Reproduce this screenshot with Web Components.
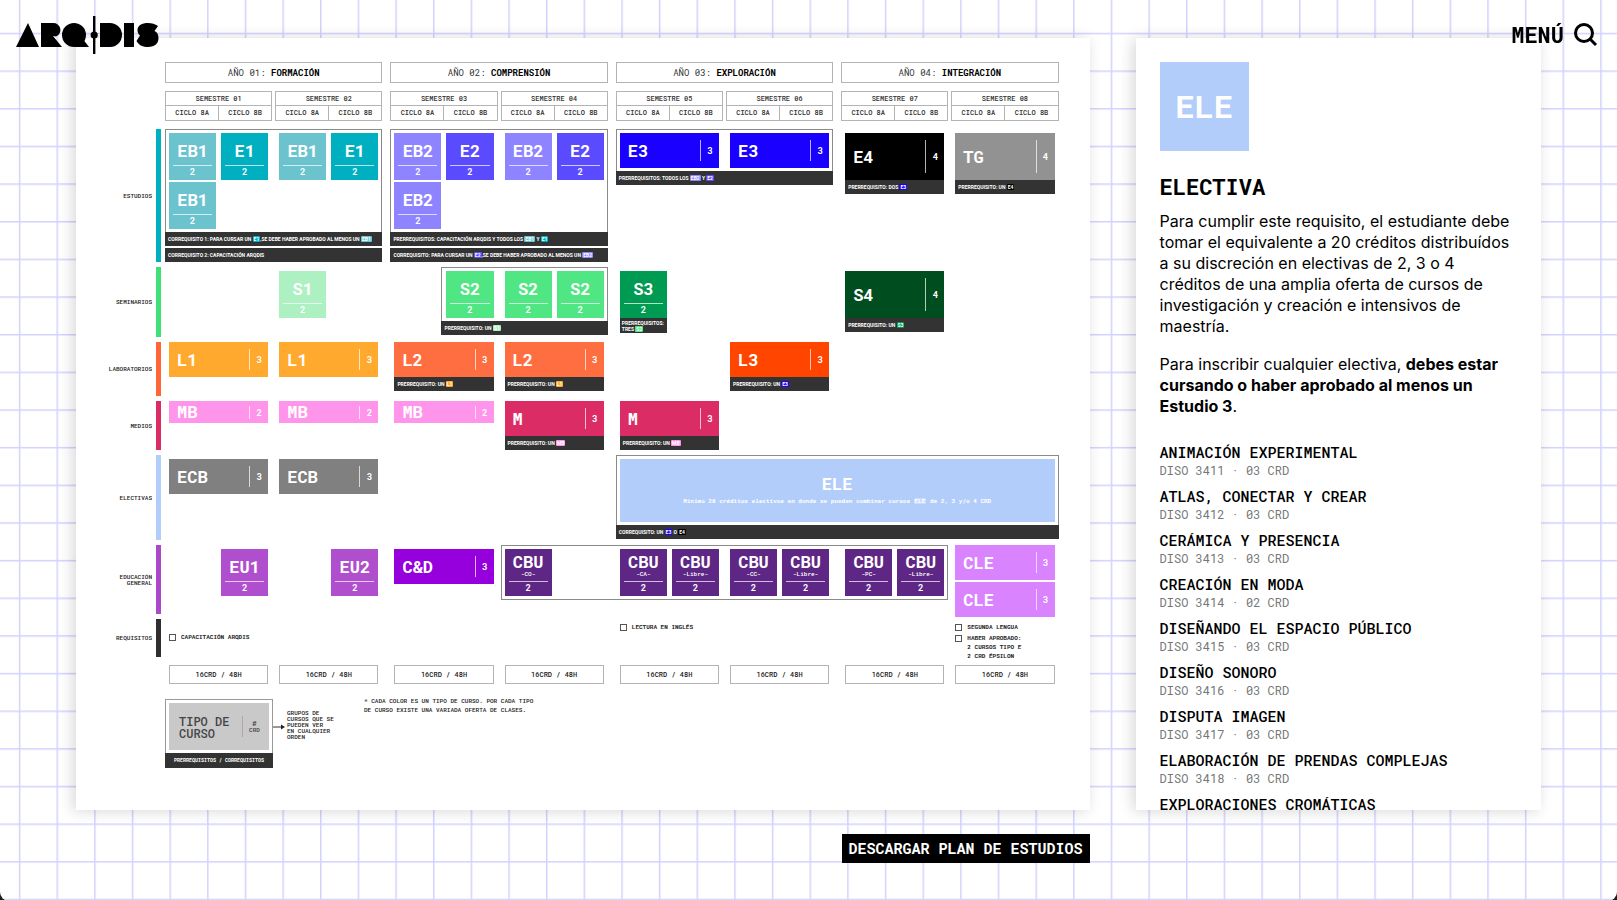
<!DOCTYPE html>
<html lang="es">
<head>
<meta charset="utf-8">
<meta name="viewport" content="width=device-width, initial-scale=1">
<title>ARQDIS · Plan de estudios</title>
<style>
  html { background: #1c1c1c; }
  body {
    margin: 0;
    color: #000;
    font-family: "Roboto Mono", "Liberation Mono", monospace;
    --mono: "Roboto Mono", "Liberation Mono", monospace;
    --sans: Inter, "Noto Sans", sans-serif;
    --note-font: Roboto, "Liberation Sans", sans-serif;
    --eb1: #6bc3ce; --e1: #00afc0; --eb2: #8e84ff; --e2: #5b4bff; --e3: #1a00ff; --e4: #000;
    --tg: #929292; --s1: #adf0c1; --s2: #4fe683; --s3: #009b52; --s4: #004d20;
    --l1: #ffaa2e; --l2: #ff6e40; --l3: #ff4500; --mb: #ff94eb; --m: #dc2c66;
    --ecb: #808080; --ele: #b2cdf9; --eu: #b04fcd; --cd: #9500dd; --cbu: #5f2785; --cle: #d983ff;
  }
</style>
</head>
<body>
<arq-page>
  <site-header slot="header"></site-header>

  <study-plan slot="plan" id="plan">
    <plan-year index="0" number="01" name="FORMACIÓN"></plan-year>
    <plan-year index="1" number="02" name="COMPRENSIÓN"></plan-year>
    <plan-year index="2" number="03" name="EXPLORACIÓN"></plan-year>
    <plan-year index="3" number="04" name="INTEGRACIÓN"></plan-year>

    <plan-row label="ESTUDIOS" style="--h:133px;--c:var(--e1)">
      <plan-block at="0" span="4" framed>
        <course-card at="0" color="eb1" credits="2">EB1</course-card>
        <course-card at="1" color="e1" credits="2">E1</course-card>
        <course-card at="2" color="eb1" credits="2">EB1</course-card>
        <course-card at="3" color="e1" credits="2">E1</course-card>
        <course-card at="0" row="2" color="eb1" credits="2">EB1</course-card>
        <plan-note slot="note">CORREQUISITO 1: PARA CURSAR UN <course-tag color="e1">E1</course-tag>,SE DEBE HABER APROBADO AL MENOS UN <course-tag color="eb1">EB1</course-tag></plan-note>
        <plan-note slot="note">CORREQUISITO 2: CAPACITACIÓN ARQDIS</plan-note>
      </plan-block>
      <plan-block at="4" span="4" framed>
        <course-card at="4" color="eb2" credits="2">EB2</course-card>
        <course-card at="5" color="e2" credits="2">E2</course-card>
        <course-card at="6" color="eb2" credits="2">EB2</course-card>
        <course-card at="7" color="e2" credits="2">E2</course-card>
        <course-card at="4" row="2" color="eb2" credits="2">EB2</course-card>
        <plan-note slot="note">PRERREQUISITOS: CAPACITACIÓN ARQDIS Y TODOS LOS <course-tag color="eb1">EB1</course-tag> Y <course-tag color="e1">E1</course-tag></plan-note>
        <plan-note slot="note">CORREQUISITO: PARA CURSAR UN <course-tag color="e2">E2</course-tag>,SE DEBE HABER APROBADO AL MENOS UN <course-tag color="eb2">EB2</course-tag></plan-note>
      </plan-block>
      <plan-block at="8" span="4" framed>
        <course-card at="8" span="2" color="e3" credits="3">E3</course-card>
        <course-card at="10" span="2" color="e3" credits="3">E3</course-card>
        <plan-note slot="note">PRERREQUISITOS: TODOS LOS <course-tag color="eb2">EB2</course-tag> Y <course-tag color="e2">E2</course-tag></plan-note>
      </plan-block>
      <plan-block at="12" span="2">
        <course-card at="12" span="2" size="tall" color="e4" credits="4">E4</course-card>
        <plan-note slot="note">PRERREQUISITO: DOS <course-tag color="e3">E3</course-tag></plan-note>
      </plan-block>
      <plan-block at="14" span="2">
        <course-card at="14" span="2" size="tall" color="tg" credits="4">TG</course-card>
        <plan-note slot="note">PRERREQUISITO: UN <course-tag color="e4">E4</course-tag></plan-note>
      </plan-block>
    </plan-row>

    <plan-row label="SEMINARIOS" style="--h:70px;--c:#3fe077">
      <plan-block at="2" span="1">
        <course-card at="2" color="s1" credits="2">S1</course-card>
      </plan-block>
      <plan-block at="5" span="3" framed>
        <course-card at="5" color="s2" credits="2">S2</course-card>
        <course-card at="6" color="s2" credits="2">S2</course-card>
        <course-card at="7" color="s2" credits="2">S2</course-card>
        <plan-note slot="note">PRERREQUISITO: UN <course-tag color="s1">S1</course-tag></plan-note>
      </plan-block>
      <plan-block at="8" span="1">
        <course-card at="8" color="s3" credits="2">S3</course-card>
        <plan-note slot="note" compact>PRERREQUISITOS:<br>TRES <course-tag color="s2">S2</course-tag></plan-note>
      </plan-block>
      <plan-block at="12" span="2">
        <course-card at="12" span="2" size="tall" color="s4" credits="4">S4</course-card>
        <plan-note slot="note">PRERREQUISITO: UN <course-tag color="s3">S3</course-tag></plan-note>
      </plan-block>
    </plan-row>

    <plan-row label="LABORATORIOS" flush style="--h:54px;--c:#ff6537">
      <plan-block at="0" span="2"><course-card at="0" span="2" color="l1" credits="3">L1</course-card></plan-block>
      <plan-block at="2" span="2"><course-card at="2" span="2" color="l1" credits="3">L1</course-card></plan-block>
      <plan-block at="4" span="2">
        <course-card at="4" span="2" color="l2" credits="3">L2</course-card>
        <plan-note slot="note">PRERREQUISITO: UN <course-tag color="l1">L1</course-tag></plan-note>
      </plan-block>
      <plan-block at="6" span="2">
        <course-card at="6" span="2" color="l2" credits="3">L2</course-card>
        <plan-note slot="note">PRERREQUISITO: UN <course-tag color="l1">L1</course-tag></plan-note>
      </plan-block>
      <plan-block at="10" span="2">
        <course-card at="10" span="2" color="l3" credits="3">L3</course-card>
        <plan-note slot="note">PRERREQUISITO: UN <course-tag color="e3">E3</course-tag></plan-note>
      </plan-block>
    </plan-row>

    <plan-row label="MEDIOS" flush style="--h:49px;--c:var(--m)">
      <plan-block at="0" span="2"><course-card at="0" span="2" size="slim" color="mb" credits="2">MB</course-card></plan-block>
      <plan-block at="2" span="2"><course-card at="2" span="2" size="slim" color="mb" credits="2">MB</course-card></plan-block>
      <plan-block at="4" span="2"><course-card at="4" span="2" size="slim" color="mb" credits="2">MB</course-card></plan-block>
      <plan-block at="6" span="2">
        <course-card at="6" span="2" color="m" credits="3">M</course-card>
        <plan-note slot="note">PRERREQUISITO: UN <course-tag color="mb">MB</course-tag></plan-note>
      </plan-block>
      <plan-block at="8" span="2">
        <course-card at="8" span="2" color="m" credits="3">M</course-card>
        <plan-note slot="note">PRERREQUISITO: UN <course-tag color="mb">MB</course-tag></plan-note>
      </plan-block>
    </plan-row>

    <plan-row label="ELECTIVAS" style="--h:85px;--c:var(--ele)">
      <plan-block at="0" span="2"><course-card at="0" span="2" color="ecb" credits="3">ECB</course-card></plan-block>
      <plan-block at="2" span="2"><course-card at="2" span="2" color="ecb" credits="3">ECB</course-card></plan-block>
      <plan-block at="8" span="8" framed>
        <course-card at="8" span="8" size="hero" color="ele">ELE<span slot="detail">Mínimo 20 créditos electivos en donde se pueden combinar cursos <course-tag color="halo">ELE</course-tag> de 2, 3 y/o 4 CRD</span></course-card>
        <plan-note slot="note">CORREQUISITO: UN <course-tag color="e3">E3</course-tag> O <course-tag color="e4">E4</course-tag></plan-note>
      </plan-block>
    </plan-row>

    <plan-row label="EDUCACIÓN GENERAL" style="--h:69px;--c:#ab48ca">
      <plan-block at="1" span="1"><course-card at="1" color="eu" credits="2">EU1</course-card></plan-block>
      <plan-block at="3" span="1"><course-card at="3" color="eu" credits="2">EU2</course-card></plan-block>
      <plan-block at="4" span="2"><course-card at="4" span="2" color="cd" credits="3">C&amp;D</course-card></plan-block>
      <plan-block at="6" span="8" framed>
        <course-card at="6" color="cbu" credits="2">CBU<span slot="detail">-CO-</span></course-card>
        <course-card at="8" color="cbu" credits="2">CBU<span slot="detail">-CA-</span></course-card>
        <course-card at="9" color="cbu" credits="2">CBU<span slot="detail">-Libre-</span></course-card>
        <course-card at="10" color="cbu" credits="2">CBU<span slot="detail">-CC-</span></course-card>
        <course-card at="11" color="cbu" credits="2">CBU<span slot="detail">-Libre-</span></course-card>
        <course-card at="12" color="cbu" credits="2">CBU<span slot="detail">-PC-</span></course-card>
        <course-card at="13" color="cbu" credits="2">CBU<span slot="detail">-Libre-</span></course-card>
      </plan-block>
      <plan-block at="14" span="2" flush>
        <course-card at="14" span="2" color="cle" credits="3">CLE</course-card>
        <course-card at="14" span="2" row="2" color="cle" credits="3">CLE</course-card>
      </plan-block>
    </plan-row>

    <plan-row label="REQUISITOS" style="--h:38px;--c:#2e2e2e">
      <plan-requirements at="0" span="4" centered>
        <plan-check>CAPACITACIÓN ARQDIS</plan-check>
      </plan-requirements>
      <plan-requirements at="8" span="4">
        <plan-check>LECTURA EN INGLÉS</plan-check>
      </plan-requirements>
      <plan-requirements at="14" span="2">
        <plan-check>SEGUNDA LENGUA</plan-check>
        <plan-check>HABER APROBADO:<br>2 CURSOS TIPO E<br>2 CRD ÉPSILON</plan-check>
      </plan-requirements>
    </plan-row>

    <credit-total at="0">16CRD / 48H</credit-total>
    <credit-total at="2">16CRD / 48H</credit-total>
    <credit-total at="4">16CRD / 48H</credit-total>
    <credit-total at="6">16CRD / 48H</credit-total>
    <credit-total at="8">16CRD / 48H</credit-total>
    <credit-total at="10">16CRD / 48H</credit-total>
    <credit-total at="12">16CRD / 48H</credit-total>
    <credit-total at="14">16CRD / 48H</credit-total>

    <plan-legend></plan-legend>
  </study-plan>

  <download-link slot="action" href="#plan">DESCARGAR PLAN DE ESTUDIOS</download-link>

  <course-detail slot="detail" code="ELE" name="ELECTIVA">
    <p slot="text">Para cumplir este requisito, el estudiante debe tomar el equivalente a 20 créditos distribuídos a su discreción en electivas de 2, 3 o 4 créditos de una amplia oferta de cursos de investigación y creación e intensivos de maestría.</p>
    <p slot="text">Para inscribir cualquier electiva, <b>debes estar cursando o haber aprobado al menos un Estudio 3</b>.</p>
    <elective-item code="DISO 3411" credits="03">ANIMACIÓN EXPERIMENTAL</elective-item>
    <elective-item code="DISO 3412" credits="03">ATLAS, CONECTAR Y CREAR</elective-item>
    <elective-item code="DISO 3413" credits="03">CERÁMICA Y PRESENCIA</elective-item>
    <elective-item code="DISO 3414" credits="02">CREACIÓN EN MODA</elective-item>
    <elective-item code="DISO 3415" credits="03">DISEÑANDO EL ESPACIO PÚBLICO</elective-item>
    <elective-item code="DISO 3416" credits="03">DISEÑO SONORO</elective-item>
    <elective-item code="DISO 3417" credits="03">DISPUTA IMAGEN</elective-item>
    <elective-item code="DISO 3418" credits="03">ELABORACIÓN DE PRENDAS COMPLEJAS</elective-item>
    <elective-item>EXPLORACIONES CROMÁTICAS</elective-item>
  </course-detail>
</arq-page>

<script>
/* Column lines of the plan: 4 tracks for label and bar, then 6 tracks per semester
   (edge, cycle A, gutter, cycle B, edge, separator). A cell is one cycle, 0 to 15. */
const cellLine = c => 6 * (c >> 1) + 6 + 2 * (c & 1);
const num = (el, name, fallback = 0) => Number(el.getAttribute(name) ?? fallback);

function define(name, html, connected) {
  const template = document.createElement('template');
  template.innerHTML = html;
  customElements.define(name, class extends HTMLElement {
    constructor() {
      super();
      this.attachShadow({ mode: 'open' }).append(template.content.cloneNode(true));
    }
    connectedCallback() { if (connected) connected(this, this.shadowRoot); }
  });
}
const place = el => {
  const at = num(el, 'at'), span = num(el, 'span', 2), pad = el.hasAttribute('framed') ? 1 : 0;
  el.style.gridColumn = `${cellLine(at) - pad} / ${cellLine(at + span - 1) + 1 + pad}`;
};

define('arq-page', `
<style>
  :host { display: block; position: relative; min-height: 100vh; background: #fff; overflow: hidden; border-radius: 0 0 9px 9px; }
  .paper { position: absolute; inset: 0; width: 100%; height: 100%; }
  .layout { position: relative; display: grid; grid-template-columns: minmax(0, 5fr) minmax(0, 2fr); column-gap: 46px; padding: 38px 76px; }
  .panel { background: #fff; box-shadow: -3px 1px 14px rgba(0, 0, 0, .16); }
  .side { height: 0; min-height: 100%; overflow: auto; scrollbar-width: none; }
  .action { display: flex; justify-content: flex-end; padding-top: 24px; }
</style>
<svg class="paper" viewBox="0 0 4300 2393" preserveAspectRatio="xMinYMin slice" aria-hidden="true">
  <defs><pattern id="cell" width="100" height="100" patternUnits="userSpaceOnUse" patternTransform="translate(50 -13)">
    <path d="M0 0H4V100H0ZM0 0H100V4H0Z" fill="#d2d2ff"/></pattern></defs>
  <rect width="4300" height="6000" fill="url(#cell)"/>
</svg>
<div class="layout">
  <main class="panel"><slot name="plan"></slot></main>
  <aside class="panel side"><slot name="detail"></slot></aside>
  <div class="action"><slot name="action"></slot></div>
</div>
<slot name="header"></slot>`);

define('site-header', `
<style>
  :host { position: absolute; top: 16px; left: 15px; right: 19px; display: flex; justify-content: space-between; align-items: flex-start; }
  a, svg { display: block; }
  nav { display: flex; align-items: center; gap: 10px; height: 38px; }
  button { border: 0; padding: 0; background: none; color: #000; font: bold 22px/30px var(--mono); cursor: pointer; }
</style>
<a href="#inicio" aria-label="ARQDIS">
  <svg width="144" height="38" viewBox="0 0 144 38" aria-hidden="true">
    <path d="M1 31 13 7 24 31Z"/>
    <path d="M26 7h12a7 7 0 0 1 3 13.500L38 20L47 31H26Z"/>
    <circle cx="59" cy="19" r="12"/><path d="M59 31H74L67 22Z"/>
    <rect x="78" y="0" width="2.4" height="38"/><circle cx="79.2" cy="19" r="3.6"/>
    <path d="M85 7h10a12 12 0 0 1 0 24H85Z"/>
    <rect x="109" y="7" width="10" height="24"/>
    <path d="M143 10C140 8 137 7 133 7C127 7 122.500 9.500 122.500 14C122.500 16.500 123.500 18.500 125 19.500L121.500 25C124 29.500 128 31 133 31C140 31 143.500 27.500 143.500 22C143.500 18.500 142 16 139.500 15Z"/>
  </svg>
</a>
<nav>
  <button type="button">MENÚ</button>
  <button type="button" aria-label="Buscar">
    <svg width="24" height="24" viewBox="0 0 24 24" fill="none" stroke="#000" stroke-width="3"><circle cx="10" cy="10" r="8.500"/><path d="M16 16l6 6"/></svg>
  </button>
</nav>`);

define('study-plan', `
<style>
  :host {
    --sem: 4px minmax(0, 1fr) 5px minmax(0, 1fr) 4px;
    display: grid; row-gap: 5px; padding: 24px 31px 42px 24px;
    grid-template-columns: 52px 4px 5px 4px
      var(--sem) 3px var(--sem) 8px var(--sem) 3px var(--sem) 8px
      var(--sem) 3px var(--sem) 8px var(--sem) 3px var(--sem);
  }
</style>
<slot></slot>`);

define('plan-year', `
<style>
  :host { display: grid; row-gap: 8px; margin-bottom: 3px; color: #333; text-align: center; }
  .title { font: 9px/19px var(--mono); border: 1px solid #b4b4b4; }
  .title b { color: #000; }
  .semesters { display: grid; grid-template-columns: 1fr 1fr; column-gap: 3px; font: 500 7px/14px var(--mono); }
  .semester { display: grid; grid-template-columns: 1fr 1fr; gap: 1px; padding: 1px; background: #b4b4b4; }
  .semester > * { background: #fff; line-height: 14px; height: 14px; }
  .semester :first-child { grid-column: 1 / -1; height: 13px; line-height: 13px; }
</style>
<div class="title"></div><div class="semesters"></div>`, (el, root) => {
  const i = num(el, 'index');
  el.style.gridColumn = `${5 + 12 * i} / span 11`;
  root.querySelector('.title').innerHTML = `AÑO ${el.getAttribute('number')}: <b>${el.getAttribute('name')}</b>`;
  root.querySelector('.semesters').innerHTML = [1, 2].map(n =>
    `<div class="semester"><span>SEMESTRE 0${2 * i + n}</span><span>CICLO 8A</span><span>CICLO 8B</span></div>`).join('');
});

define('plan-row', `
<style>
  :host { grid-column: 1 / -1; display: grid; grid-template-columns: subgrid; grid-template-rows: var(--h); --top: 4px; }
  :host([flush]) { --top: 0px; }
  .label { grid-column: 1; grid-row: 1; align-self: center; text-align: right; font: 500 6px/6px var(--mono); color: #222; }
  .bar { grid-column: 3; grid-row: 1; background: var(--c); }
</style>
<div class="label"></div><div class="bar"></div><slot></slot>`, (el, root) => {
  root.querySelector('.label').textContent = el.getAttribute('label');
});

define('plan-block', `
<style>
  :host { grid-row: 1; align-self: start; display: grid; grid-template-columns: subgrid; padding-top: var(--top); }
  :host([framed]), :host([flush]) { padding-top: 0; }
  .courses { grid-column: 1 / -1; display: grid; grid-template-columns: subgrid; row-gap: 2px; }
  :host([framed]) .courses { box-sizing: border-box; border: 1px solid #8a8a8a; padding: 3px 0; }
  :host([framed]) .noted { border-bottom: 0; }
  .notes { grid-column: 1 / -1; display: grid; row-gap: 2px; min-width: 0; }
</style>
<div class="courses"><slot></slot></div><div class="notes"><slot name="note"></slot></div>`, (el, root) => {
  place(el);
  root.querySelector('.courses').classList.toggle('noted', !!el.querySelector('plan-note'));
});

define('course-card', `
<style>
  :host { display: block; min-width: 0; }
  button {
    box-sizing: border-box; width: 100%; height: 47px; margin: 0; border: 0; padding: 0; cursor: pointer;
    display: grid; color: #fff; background: var(--card); font: bold 17px/18px var(--mono); text-align: center; overflow: hidden;
  }
  .detail { font-size: 6px; line-height: 6px; font-weight: 500; }
  .credits { font-size: 9px; }
  .square { grid-template-rows: 32px 15px; padding: 0 4px; }
  .square .name { align-self: center; padding-top: 3px; display: grid; }
  .square .has-detail { padding-top: 0; }
  .square .credits { border-top: 1px solid rgba(255, 255, 255, .7); line-height: 12px; }
  .wide { height: 35px; grid-template-columns: 1fr 19px; align-items: center; text-align: left; padding: 0 0 0 8px; }
  .wide .credits { box-sizing: border-box; height: 21px; line-height: 21px; border-left: 1px solid rgba(255, 255, 255, .7); text-align: center; }
  .tall { height: 47px; }
  .tall .credits { height: 33px; line-height: 33px; }
  .slim { height: 22px; }
  .slim .credits { height: 13px; line-height: 13px; }
  .hero { height: 63px; place-content: center; }
  .hero .detail { font-weight: bold; line-height: 12px; padding-top: 2px; }
  .hero .name { display: grid; }
  .hero .credits { display: none; }
</style>
<button type="button"><span class="name"><span><slot></slot></span><span class="detail"><slot name="detail"></slot></span></span><span class="credits"></span></button>`, (el, root) => {
  const block = el.closest('plan-block'), at = num(el, 'at'), span = num(el, 'span', 1);
  const base = cellLine(num(block, 'at')) - (block.hasAttribute('framed') ? 1 : 0) - 1;
  el.style.gridColumn = `${cellLine(at) - base} / ${cellLine(at + span - 1) + 1 - base}`;
  el.style.gridRow = el.getAttribute('row') || '1';
  el.style.setProperty('--card', `var(--${el.getAttribute('color')})`);
  const size = el.getAttribute('size');
  root.querySelector('button').className = size === 'hero' ? 'hero' : span > 1 ? `wide ${size || ''}` : 'square';
  root.querySelector('.name').classList.toggle('has-detail', !!el.querySelector('[slot=detail]'));
  root.querySelector('.credits').textContent = el.getAttribute('credits') || '';
});

define('plan-note', `
<style>
  :host { display: block; box-sizing: border-box; height: 14px; padding: 0 3px; background: #333; color: #fff; font: bold 5px/14px var(--note-font); white-space: nowrap; }
  :host([compact]) { height: 15px; padding: 2px 2px 0; line-height: 6px; }
</style>
<slot></slot>`);

define('course-tag', `
<style>
  :host { display: inline-block; padding: 0 1px; border-radius: 1px; background: var(--tag); color: #fff; line-height: 6px; }
</style>
<slot></slot>`, el => {
  const color = el.getAttribute('color');
  el.style.setProperty('--tag', color === 'halo' ? 'rgba(255,255,255,.3)' : `var(--${color})`);
});

define('plan-requirements', `
<style>
  :host { grid-row: 1; display: grid; align-content: start; row-gap: 1px; padding-top: 4px; }
  :host([centered]) { align-content: center; padding-top: 0; }
</style>
<slot></slot>`, place);

define('plan-check', `
<style>
  :host { display: block; height: 10px; }
  label { display: flex; gap: 5px; font: bold 6px/9px var(--mono); color: #222; white-space: nowrap; }
  input { appearance: none; box-sizing: border-box; flex: none; width: 7px; height: 7px; margin: 1px 0 0; border: 1px solid #555; background: #fff; }
</style>
<label><input type="checkbox"><span><slot></slot></span></label>`);

define('credit-total', `
<style>
  :host { display: block; margin-top: 3px; border: 1px solid #b4b4b4; color: #222; font: 500 7px/17px var(--mono); text-align: center; }
</style>
<slot></slot>`, place);

define('plan-legend', `
<style>
  :host { grid-column: 5 / -1; display: flex; align-items: flex-start; margin-top: 10px; color: #222; font: 500 6px/6px var(--mono); }
  .sample { flex: none; width: 108px; }
  .frame { border: 1px solid #999; border-bottom: 0; padding: 3px; }
  .card { display: grid; grid-template-columns: 1fr 27px; align-items: center; height: 47px; padding-left: 10px; background: #c9c9c9; color: #444; font: 500 12px/12px var(--mono); box-sizing: border-box; }
  .credits { height: 21px; border-left: 1px solid #aaa; font-size: 6px; line-height: 7px; text-align: center; display: grid; align-content: center; margin-right: 3px; }
  .credits span { font-size: 8px; }
  .bar { height: 15px; background: #333; color: #fff; font: bold 5px/15px var(--mono); text-align: center; }
  svg { display: block; flex: none; margin-top: 24px; }
  .group { flex: none; width: 61px; padding: 11px 0 0 2px; margin-right: 16px; white-space: nowrap; }
  .hint { margin: -2px 0 0; line-height: 9px; white-space: nowrap; }
</style>
<div class="sample">
  <div class="frame"><div class="card"><span>TIPO DE<br>CURSO</span><span class="credits"><span>#</span>CRD</span></div></div>
  <div class="bar">PRERREQUISITOS / CORREQUISITOS</div>
</div>
<svg width="12" height="8" viewBox="0 0 12 8" aria-hidden="true"><path d="M0 4H9" stroke="#333"/><path d="M8 1.500 12 4 8 6.500Z" fill="#222"/></svg>
<div class="group">GRUPOS DE<br>CURSOS QUE SE<br>PUEDEN VER<br>EN CUALQUIER<br>ORDEN</div>
<p class="hint">* CADA COLOR ES UN TIPO DE CURSO. POR CADA TIPO<br>DE CURSO EXISTE UNA VARIADA OFERTA DE CLASES.</p>`);

define('download-link', `
<style>
  :host { display: block; }
  a { display: block; padding: 0 7px; background: #000; color: #fff; font: bold 15px/29px var(--mono); text-decoration: none; white-space: nowrap; }
</style>
<a><slot></slot></a>`, (el, root) => { root.querySelector('a').href = el.getAttribute('href'); });

define('course-detail', `
<style>
  :host { display: block; padding: 24px; }
  .tile { width: 89px; height: 89px; background: var(--ele); color: #fff; font: bold 32px/87px var(--mono); text-align: center; }
  h1 { margin: 21px 0 9px; font: bold 22px/30px var(--mono); }
  ::slotted(p) { margin: 0 0 17px; font: 16px/21px var(--sans); }
  .list { display: grid; padding-top: 8px; }
</style>
<div class="tile"></div><h1></h1><slot name="text"></slot><div class="list" role="list"><slot></slot></div>`, (el, root) => {
  root.querySelector('.tile').textContent = el.getAttribute('code');
  root.querySelector('h1').textContent = el.getAttribute('name');
});

define('elective-item', `
<style>
  :host { display: block; height: 44px; }
  h2 { margin: 0; font: 500 15px/20px var(--mono); }
  p { margin: 0; font: 12px/16px var(--mono); color: #777; }
</style>
<h2><slot></slot></h2><p></p>`, (el, root) => {
  el.setAttribute('role', 'listitem');
  if (el.hasAttribute('code')) root.querySelector('p').textContent = `${el.getAttribute('code')} · ${el.getAttribute('credits')} CRD`;
});
</script>
</body>
</html>
